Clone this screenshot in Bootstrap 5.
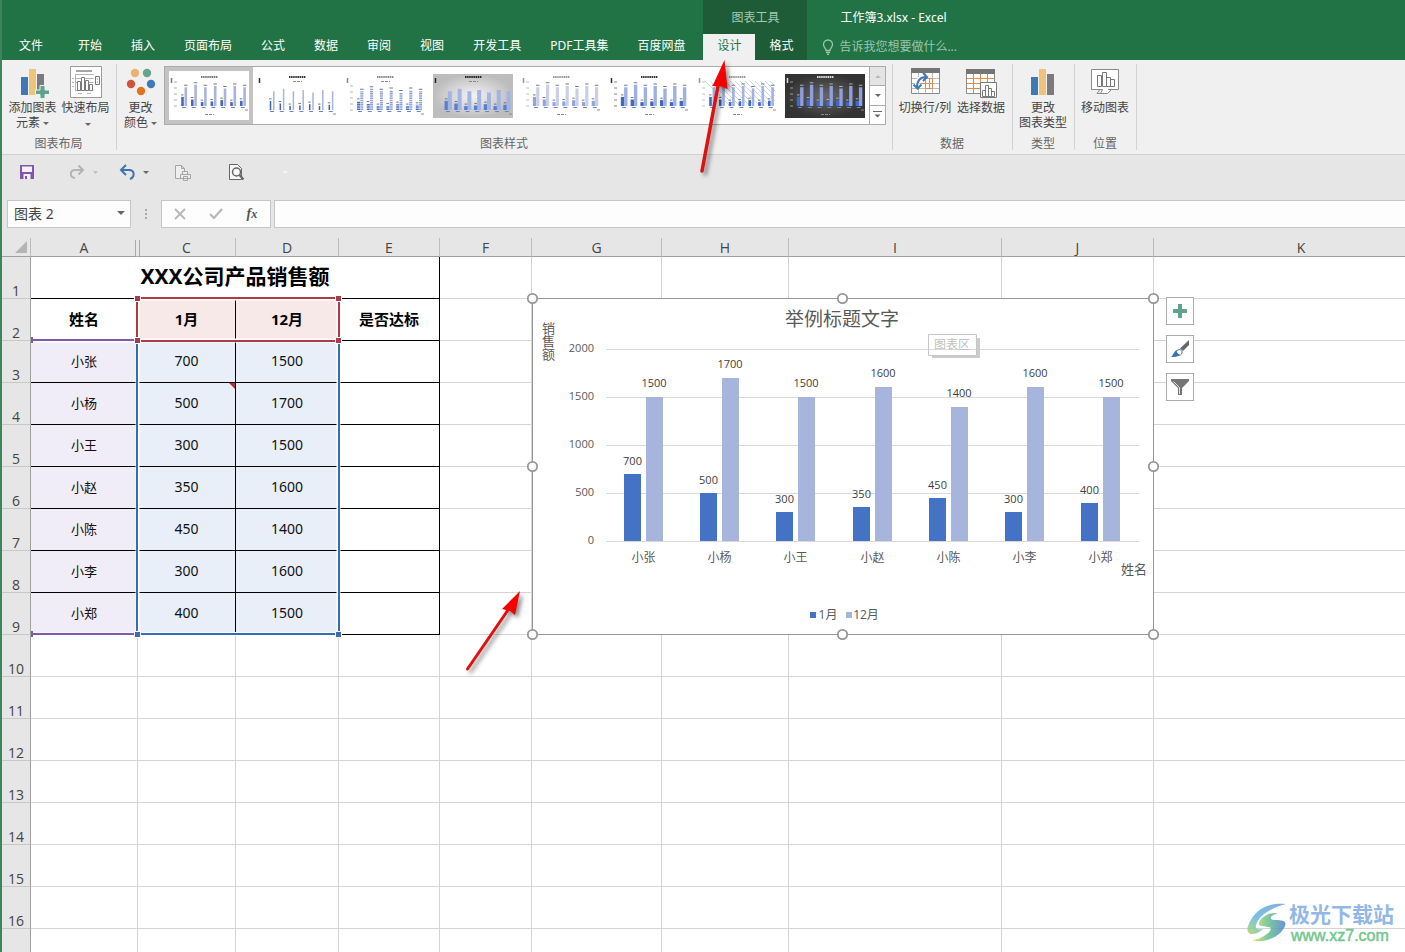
<!DOCTYPE html>
<html lang="zh-CN">
<head>
<meta charset="utf-8">
<meta name="viewport" content="width=device-width, initial-scale=1">
<title>工作簿3.xlsx - Excel</title>
<link href="https://cdn.jsdelivr.net/npm/bootstrap@5.3.0/dist/css/bootstrap.min.css" rel="stylesheet">
<style>
:root{--xl:#217346;--xl-dark:#1e5c38;--chrome:#e6e6e6;--ribbon:#f0f0f0;--line:#d4d4d4}
body{font-family:"Noto Sans","Noto Sans CJK SC",sans-serif;font-size:12px;line-height:16px;color:#444;background:var(--chrome)}
.app{border-left:2px solid #3c855d}
button{font:inherit;color:inherit;border:0;background:none;padding:0}
svg{display:block;flex:none}
/* title bar and tabs */
.topbar{background:var(--xl);height:60px;color:#fff}
.tabs{gap:29px;padding:0 18px 0 17px}
.tabs a,.ctx a{color:inherit;text-decoration:none;line-height:24px;height:26px;white-space:nowrap}
.tabs a:first-child{margin-right:6px}
.ctx{background:var(--xl-dark);width:104px}
.ctx-name{height:34px;line-height:36px;color:#a3c9b2;text-align:center}
.ctx a{flex:1;text-align:center}
.ctx a.on{background:var(--ribbon);color:var(--xl)}
.doc-name{line-height:36px;height:34px;padding-left:33px}
.tell{height:26px;padding-left:15px;gap:5px}
.tell input{background:none;border:0;padding:0;color:#fff;width:150px;outline:0}
.tell input::placeholder{color:#9cc5ad;opacity:1}
/* ribbon */
.ribbon{background:var(--ribbon);border-bottom:1px solid #d0d0d0;height:95px}
.group{position:relative;padding:6px 2px 0 0;display:flex;flex-direction:column}
.group::after{content:"";position:absolute;right:0;top:4px;bottom:4px;width:1px;background:#d2d2d2}
.group-name{color:#666;text-align:center;margin-top:auto;padding-bottom:2px}
.big{display:flex;flex-direction:column;align-items:center;line-height:15px;white-space:nowrap;color:#444}
.big svg.ico{margin-bottom:2px}
.g1 .big{width:53px}
.g3 .big{width:56px}
.drop{display:inline-block;border:3px solid transparent;border-top-color:#666;border-bottom:0;vertical-align:2px;margin-left:3px}
.gallery{border:1px solid #ababab;background:#fff;height:59px}
.gallery button.th{width:88px;height:57px;display:flex;align-items:center;justify-content:center}
.gallery button.th.on{border:4px solid #c3c3c3}
.scroller{width:16px;border-left:1px solid #ababab}
.scroller button{flex:1;display:flex;align-items:center;justify-content:center}
.scroller button+button{border-top:1px solid #ababab}
.scroller .drop{margin:0}
.scroller button:first-child{background:#e4e4e4}
/* quick access + formula bar */
.qat{display:grid;grid-template-columns:50px 50px 52px 56px 52px 46px;height:45px;padding-bottom:11px}
.qat button{display:flex;align-items:center;justify-content:center}
.fbar{height:28px}
.fbox{background:#fdfdfd;border:1px solid #c6c6c6}
.namebox{width:124px;margin-left:5px;position:relative}
.namebox select{appearance:none;border:0;background:none;width:100%;height:100%;padding:0 6px;font-size:14px;color:#444}
.namebox .drop{position:absolute;right:5px;top:10px;border-width:4px 4px 0;pointer-events:none}
.fx{width:110px;margin-right:3px}
.fx button{width:36px;display:flex;justify-content:center;align-items:center}
.fml{flex:1;border-right:0;border-radius:0;outline:0;min-width:0;padding:0 6px}
/* worksheet */
.sheet{margin-top:10px;background:#fff;position:relative;overflow:hidden;flex:1;min-height:0}
/* the last column runs on past the window edge */
.grid{table-layout:fixed;border-collapse:separate;border-spacing:0;width:calc(100% + 44px)}
.grid th,.grid td{padding:0;text-align:center;border-right:1px solid var(--line);border-bottom:1px solid var(--line)}
.grid td{padding-bottom:2px}
.grid tbody tr{height:42px}
.grid tbody tr.last{height:60px}
.grid thead th{height:19px;background:var(--chrome);border-right-color:#bdbdbd;border-bottom-color:#9f9f9f;font:400 14px/17px "Open Sans",sans-serif;color:#444;position:relative}
.grid tbody th{background:var(--chrome);border-right-color:#9f9f9f;border-bottom-color:#c8c8c8;font:400 14px/15px "Open Sans",sans-serif;color:#444;vertical-align:bottom}
.grid thead .hid{border-right-color:transparent}
.grid .hid::after{content:"";position:absolute;z-index:1;right:-3px;top:2px;bottom:0;width:5px;border:solid #aaa;border-width:0 1px}
.corner::after{content:"";position:absolute;right:3px;bottom:3px;border:6px solid;border-color:transparent #b4b4b4 #b4b4b4 transparent}
.grid td.k{border-color:#000;color:#111;font-size:14px}
.grid td.nm{background:#f1edf8;font-size:13px}
.grid td.v{background:#e8eff9}
.grid td.hd{font-size:15px;font-weight:700;color:#000}
.grid td.r{background:#f8e9e9}
.grid td.noside{border-right-color:transparent}
.grid td.ttl{font-size:21px;font-weight:700;color:#000;padding-bottom:4px}
.sel,.chart,.side,.arrow,.mark-xz{position:absolute}
.sel{left:28px;top:54px}
.chart{left:522px;top:52px}
.side{left:1164px;top:59px;display:flex;flex-direction:column;gap:10px}
.side button{width:28px;height:28px;background:#fff;border:1px solid #ababab;display:flex;align-items:center;justify-content:center}
.chart text{font-family:"Open Sans","Noto Sans CJK SC",sans-serif}
.ct{font-size:11px;fill:#404040;text-anchor:middle}
.ax{font-size:11px;fill:#595959;text-anchor:end}
.cat{font-size:12px;fill:#595959;text-anchor:middle}
.vert{font-size:13px;fill:#595959;writing-mode:vertical-rl}
.arrow{pointer-events:none;filter:drop-shadow(3px 3px 2px rgba(0,0,0,.45))}
.a1{left:690px;top:54px}
.a2{left:456px;top:584px}
.mark-xz{right:11px;bottom:7px;gap:1px;align-items:center}
.mark-xz b{display:block;font:700 21px/27px "Noto Sans CJK SC",sans-serif;color:#93b7e6}
.mark-xz span{display:block;font:400 16px/18px "Liberation Sans",sans-serif;color:#74c690;-webkit-text-stroke:.5px #74c690;padding-left:2px}
</style>
</head>
<body>
<div class="app vh-100 d-flex flex-column overflow-hidden position-relative">

<header class="topbar d-flex flex-shrink-0">
  <nav class="tabs d-flex align-items-end" aria-label="功能区">
    <a href="#">文件</a><a href="#">开始</a><a href="#">插入</a><a href="#">页面布局</a><a href="#">公式</a><a href="#">数据</a><a href="#">审阅</a><a href="#">视图</a><a href="#">开发工具</a><a href="#">PDF工具集</a><a href="#">百度网盘</a>
  </nav>
  <div class="ctx flex-shrink-0">
    <div class="ctx-name">图表工具</div>
    <nav class="d-flex" aria-label="图表工具"><a class="on" href="#">设计</a><a href="#">格式</a></nav>
  </div>
  <div class="flex-grow-1">
    <div class="doc-name">工作簿3.xlsx - Excel</div>
    <div class="tell d-flex align-items-center">
      <svg width="12" height="16" viewBox="0 0 12 16" fill="none" stroke="#9cc5ad" stroke-width="1.3"><path d="M4 11.5C4 9 1.5 8.500 1.500 5.500a4.500 4.500 0 0 1 9 0C10.500 8.500 8 9 8 11.500zM4 13.500h4M5 15.300h2"/></svg>
      <input type="text" aria-label="告诉我" placeholder="告诉我您想要做什么...">
    </div>
  </div>
</header>

<section class="ribbon d-flex flex-shrink-0">
  <div class="group g1" style="width:115px">
    <div class="d-flex ps-1">
      <button class="big"><svg class="ico" width="32" height="32" viewBox="0 0 32 32"><path fill="#3f78b5" d="M4 11h7v18H4z"/><path fill="#eec37c" d="M12 3h7v26h-7z"/><path fill="#7b7b7b" d="M20 8h7v21h-7z"/><path fill="#5fa38c" stroke="#f0f0f0" d="M23 19.500h5v4.500h4.500v4.500H28V33h-5v-4.500h-4.500V24H23z"/></svg><span>添加图表</span><span>元素<i class="drop"></i></span></button>
      <button class="big"><svg class="ico" width="32" height="32" viewBox="0 0 32 32" fill="none" stroke="#7a7a7a"><path fill="#fff" stroke="#9a9a9a" d="M.5.500h31v31H.5z"/><path stroke-width="2" stroke="#a5a5a5" d="M6 5h16"/><path stroke="#b5b5b5" d="M5.500 8.500h18M5.500 24.500h18M2 12.500h2M2 16.500h2M2 20.500h2M5.500 12.500h18M5.500 16.500h18M8 27.500h4M17 27.500h4M5.500 8v17"/><path fill="#fff" d="M7.500 15.500h3v9h-3zM11.500 11.500h3v13h-3zM15.500 14.500h3v10h-3zM19.500 18.500h3v6h-3zM25.500 10.500h4v8h-4z"/><path d="M27 13h1M27 16h1"/></svg><span>快速布局</span><i class="drop mt-2 ms-1"></i></button>
    </div>
    <div class="group-name">图表布局</div>
  </div>
  <div class="group g2" style="width:776px">
    <div class="d-flex">
      <button class="big" style="width:47px"><svg class="ico" width="32" height="32" viewBox="0 0 32 32"><circle cx="10" cy="7" r="4.200" fill="#e9b26d"/><circle cx="22" cy="7" r="4.200" fill="#63a58e"/><circle cx="6" cy="18" r="4.200" fill="#d0533a"/><circle cx="26" cy="18" r="4.200" fill="#4278b8"/><circle cx="16" cy="25" r="4.200" fill="#e27420"/></svg><span>更改</span><span>颜色<i class="drop"></i></span></button>
      <div class="gallery d-flex"><div class="d-flex" id="styles"></div>
        <div class="scroller d-flex flex-column"><button aria-label="上一行"><svg width="6" height="3"><path fill="#bbb" d="M0 3l3-3 3 3z"/></svg></button><button aria-label="下一行"><i class="drop"></i></button><button aria-label="其他"><svg width="9" height="7"><path fill="#666" d="M0 0h9v1H0zM1.500 3.500h6l-3 3z"/></svg></button></div>
      </div>
    </div>
    <div class="group-name">图表样式</div>
  </div>
  <div class="group g3" style="width:120px">
    <div class="d-flex ps-1">
      <button class="big"><svg class="ico" width="32" height="32" viewBox="0 0 32 32" fill="none"><path fill="#fff" stroke="#8a8a8a" d="M2.500 3.500h28v24h-28z"/><path fill="#757575" d="M2 2h29v5H2z"/><path stroke="#bbb" d="M9.500 7v20M16.500 7v20M23.500 7v20M3 12.500h27M3 17.500h27M3 22.500h27"/><path stroke="#e08a4a" d="M16.500 12.500h7v10h-7zM12 17.500h12M20.500 22V12"/><path stroke="#fff" stroke-width="4" d="M8 20c0-6 3-9 9-9"/><path stroke="#3f78b5" stroke-width="2" d="M8 22c0-7 3-11 9-11M14 7l4 4-4 4M4.500 18.500l4 4 4-4"/></svg><span>切换行/列</span></button>
      <button class="big"><svg class="ico" width="32" height="32" viewBox="0 0 32 32" fill="none"><path fill="#fff" stroke="#8a8a8a" d="M1.500 3.500h28v24h-28z"/><path fill="#757575" d="M1 3h29v5H1z"/><path stroke="#e08a4a" d="M8.500 8v19M15.500 8v19M22.500 8v10M2 12.500h27M2 17.500h20M2 22.500h15"/><path fill="#fff" stroke="#7a7a7a" d="M15.500 16.500h16v15h-16z"/><path fill="#fff" stroke="#7a7a7a" d="M17.500 24.500h3v6h-3zM20.500 19.500h3v11h-3zM23.500 22.500h3v8h-3zM26.500 25.500h3v5h-3z"/></svg><span>选择数据</span></button>
    </div>
    <div class="group-name">数据</div>
  </div>
  <div class="group align-items-center" style="width:62px">
    <button class="big"><svg class="ico" width="32" height="32" viewBox="0 0 32 32"><path fill="#3f78b5" d="M4 11h7v18H4z"/><path fill="#eec37c" d="M12 3h7v26h-7z"/><path fill="#7b7b7b" d="M20 8h7v21h-7z"/></svg><span>更改</span><span>图表类型</span></button>
    <div class="group-name">类型</div>
  </div>
  <div class="group align-items-center" style="width:62px">
    <button class="big"><svg class="ico" width="32" height="32" viewBox="0 0 32 32" fill="#fff" stroke="#8a8a8a"><path d="M2.500 3.500h27v20h-7l-4 4h-7l2-4h-11z"/><path fill="none" d="M2 23.500h9l-3 4h6M19 23.500h4"/><path stroke="#777" d="M8.500 9.500h4v11h-4zM13.500 6.500h4v14h-4zM21.500 13.500h4v7h-4zM17.500 11.500h4v9h-4z"/></svg><span>移动图表</span></button>
    <div class="group-name">位置</div>
  </div>
</section>

<div class="qat flex-shrink-0">
  <button aria-label="保存"><svg width="16" height="16" viewBox="0 0 16 16"><path fill="#8455ad" d="M1 1h14v14H1z"/><path fill="#f6f0fa" d="M3 2.500h10V8H3zM4.500 10h7v5h-7z"/><path fill="#8455ad" d="M6 12h2v3H6z"/></svg></button>
  <button aria-label="恢复"><svg width="44" height="16" viewBox="0 0 44 16" fill="none" stroke="#b4b4b4" stroke-width="2"><path d="M27 6h-7c-5 0-6 7 0 8M23.500 1.500L28 6l-4.500 4.500"/><path fill="#c0c0c0" stroke="none" d="M38 7h5l-2.500 3z"/></svg></button>
  <button aria-label="撤消"><svg width="44" height="16" viewBox="0 0 44 16" fill="none" stroke="#3f73b0" stroke-width="2"><path d="M16 6h7c6 0 6 7 1 9M20 1l-5 5 5 5"/><path fill="#666" stroke="none" d="M37 7h6l-3 3z"/></svg></button>
  <button aria-label="打印"><svg width="17" height="17" viewBox="0 0 17 17" fill="#eee" stroke="#a5a5a5"><path d="M1.500 1.500h6l3 3v10h-9zM7.500 1.500v3h3"/><path d="M8.500 7.500h5v3h-5zM6.500 10.500h10v4h-10zM9.500 12.500h4v4h-4z"/></svg></button>
  <button aria-label="打印预览"><svg width="17" height="18" viewBox="0 0 17 18" fill="#f8f8f8" stroke="#666"><path d="M1.500 1.500h8l4 4v11h-12z"/><circle cx="8.500" cy="9" r="4" stroke-width="1.500"/><path stroke-width="2.200" d="M11.500 12l4 4.500"/></svg></button>
  <button aria-label="自定义"><svg width="6" height="3"><path fill="#f4f4f4" d="M0 0h6L3 3z"/></svg></button>
</div>

<div class="fbar d-flex flex-shrink-0">
  <div class="fbox namebox"><select aria-label="名称框"><option>图表 2</option></select><i class="drop"></i></div>
  <svg width="30" height="28"><path fill="#a8a8a8" d="M14 9h2v2h-2zM14 13h2v2h-2zM14 17h2v2h-2z"/></svg>
  <div class="fbox fx d-flex">
    <button aria-label="取消"><svg width="12" height="12" stroke="#b8b8b8" stroke-width="1.800"><path d="M1 1l10 10M11 1L1 11"/></svg></button>
    <button aria-label="输入"><svg width="14" height="12" fill="none" stroke="#b8b8b8" stroke-width="2.200"><path d="M1 6l4 4L13 1"/></svg></button>
    <button aria-label="插入函数" style="font:italic 700 14px 'Liberation Serif',serif;color:#555"><span>f<small>x</small></span></button>
  </div>
  <input class="fbox fml" type="text" aria-label="编辑栏">
</div>

<main class="sheet">
  <table class="grid">
    <colgroup><col style="width:29px"><col style="width:107px"><col style="width:98px"><col style="width:103px"><col style="width:101px"><col style="width:92px"><col style="width:130px"><col style="width:127px"><col style="width:213px"><col style="width:152px"><col></colgroup>
    <thead><tr><th class="corner"></th><th class="hid">A</th><th>C</th><th>D</th><th>E</th><th>F</th><th>G</th><th>H</th><th>I</th><th>J</th><th>K</th></tr></thead>
    <tbody id="rows"></tbody>
  </table>

  <svg class="sel" width="316" height="350" viewBox="30 292 316 350" fill="none" aria-hidden="true">
    <g stroke="#fff" stroke-width="4"><path d="M31 340.500h106M31 634.500h106"/><path d="M137.500 340v294h201V340"/><path d="M137.500 298.500h201v42h-201z"/></g>
    <path stroke="#7d5ba6" stroke-width="2" d="M32 340h105M32 634h105"/><path fill="#7d5ba6" d="M31 337h2v6h-2zM31 631h2v6h-2z"/>
    <path stroke="#3a6cb4" stroke-width="2" d="M137 340v294h202V340"/>
    <path stroke="#ac3a47" stroke-width="2" d="M137 298h202v43H137z"/>
    <g stroke="#fff"><path fill="#3a6cb4" d="M134.500 631.500h6v6h-6zM335.500 631.500h6v6h-6z"/><path fill="#ac3a47" d="M134.500 295.500h6v6h-6zM335.500 295.500h6v6h-6zM134.500 337.500h6v6h-6zM335.500 337.500h6v6h-6z"/></g>
    <path fill="#b03040" d="M229 383h6v6z"/>
  </svg>

  <svg class="chart" width="640" height="352" viewBox="524 290 640 352" id="chart" role="img" aria-label="举例标题文字"></svg>

  <div class="side">
    <button aria-label="图表元素"><svg width="14" height="14"><path fill="#5fa38c" d="M5 0h4v5h5v4H9v5H5V9H0V5h5z"/></svg></button>
    <button aria-label="图表样式"><svg width="20" height="20" viewBox="0 0 20 20"><path fill="#666" d="M19 1v5l-6 6-3-2.500z"/><path fill="#fff" stroke="#4278b8" d="M9 10.500c2 0 3.500 1.500 3 3.500s-2.500 2.500-4 2.500L6 12z"/><path fill="#3f73b0" d="M6.500 11.500c0 2 1 3.500 3.500 4-2 2.500-5 2.500-9 2.500 2-1.500 3-6 5.500-6.500z"/></svg></button>
    <button aria-label="图表筛选器"><svg width="20" height="18" viewBox="0 0 20 18"><path fill="#757575" d="M1 1h18v2l-7 7v7H8v-7L1 3z"/><path fill="none" stroke="#fff" stroke-width=".8" d="M3.500 3.500L9.500 9.500V16"/></svg></button>
  </div>

  <div class="mark-xz d-flex" aria-hidden="true">
    <svg width="42" height="42" viewBox="0 0 42 42" opacity=".85">
      <defs><linearGradient id="wa" x1="0" y1="1" x2="1" y2="0"><stop offset="0" stop-color="#a9d66a"/><stop offset=".4" stop-color="#65b6dd"/><stop offset="1" stop-color="#6c9fe0"/></linearGradient><linearGradient id="wb"><stop offset="0" stop-color="#d6e36c"/><stop offset=".5" stop-color="#67bf8a"/><stop offset="1" stop-color="#4f83d0"/></linearGradient></defs>
      <path fill="url(#wa)" d="M40 2C22 0 8 8 2 24c-2 5 1 9 5 8 4 0 8-3 10-5-5 1-8 0-7-4C13 14 24 6 40 2z"/>
      <path fill="url(#wb)" d="M32 11c-10-1-18 5-19 10-1 4 5 3 10 4 3 1 2 4-2 7-4 3-10 6-16 6 12 4 30-3 34-14 2-5-3-6-9-6-4 0-6-1-5-3 1-2 4-3 7-4z"/>
    </svg>
    <div><b>极光下载站</b><span>www.xz7.com</span></div>
  </div>
</main>

<svg class="arrow a1" width="44" height="124" viewBox="692 54 44 124" aria-hidden="true"><path fill="none" stroke="#e01010" stroke-width="3.500" stroke-linecap="round" d="M702 171L718 86"/><path fill="#f50000" d="M724.500 60l3 29-7.500-3-7.500 0z"/></svg>
<svg class="arrow a2" width="70" height="94" viewBox="458 584 70 94" aria-hidden="true"><path fill="none" stroke="#e01010" stroke-width="3" stroke-linecap="round" d="M467.500 669L508 610"/><path fill="#f50000" d="M520 591l-5 24-5-4-8-2z"/></svg>
</div>

<script src="https://cdn.jsdelivr.net/npm/bootstrap@5.3.0/dist/js/bootstrap.bundle.min.js"></script>
<script>
const data = [['小张',700,1500],['小杨',500,1700],['小王',300,1500],['小赵',350,1600],['小陈',450,1400],['小李',300,1600],['小郑',400,1500]];

/* worksheet rows */
const blank = n => '<td></td>'.repeat(n);
let rows = `<tr><th>1</th><td class="k ttl" colspan="4">XXX公司产品销售额</td>${blank(6)}</tr>
<tr><th>2</th><td class="k hd noside">姓名</td><td class="k hd r">1月</td><td class="k hd r">12月</td><td class="k hd">是否达标</td>${blank(6)}</tr>`;
data.forEach((d, i) => rows += `<tr><th>${i + 3}</th><td class="k nm">${d[0]}</td><td class="k v">${d[1]}</td><td class="k v">${d[2]}</td><td class="k"></td>${blank(6)}</tr>`);
for (let r = 10; r <= 16; r++) rows += `<tr><th>${r}</th>${blank(10)}</tr>`;
rows += `<tr class="last"><th></th>${blank(10)}</tr>`;
document.getElementById('rows').innerHTML = rows;

/* chart */
const base = 541, unit = 0.096, step = 76.2;
let c = `<path fill="#fff" stroke="#969696" d="M532.500 298.500h621v336h-621z"/><text x="842" y="326" text-anchor="middle" font-size="19" fill="#595959">举例标题文字</text>
<text class="vert" x="548" y="322">销售额</text>`;
for (let v = 0; v <= 2000; v += 500) {
  const y = base - v * unit;
  c += `<path stroke="#d9d9d9" d="M606 ${y + .5}H1139"/><text class="ax" x="594" y="${y + 3}">${v}</text>`;
}
data.forEach((d, i) => {
  const x = Math.round(624 + i * step), h1 = Math.round(d[1] * unit), h2 = Math.round(d[2] * unit);
  c += `<rect x="${x}" y="${base - h1}" width="17" height="${h1}" fill="#4472c4"/><rect x="${x + 22}" y="${base - h2}" width="17" height="${h2}" fill="#a7b4db"/>
  <text class="ct" x="${x + 8.5}" y="${base - h1 - 9}">${d[1]}</text><text class="ct" x="${x + 30}" y="${base - h2 - 10}">${d[2]}</text><text class="cat" x="${x + 19.5}" y="562">${d[0]}</text>`;
});
c += `<text class="cat" x="1134" y="574" style="font-size:13px">姓名</text>
<path fill="#4472c4" d="M810 612h6v6h-6z"/><text class="cat" x="828" y="619">1月</text>
<path fill="#a7b4db" d="M846 612h6v6h-6z"/><text class="cat" x="866" y="619">12月</text>
<path fill="#ccc" d="M932 355h48v3h-48zM977 338h3v18h-3z"/><path fill="#fff" stroke="#c6c6c6" d="M928.500 334.500h48v21h-48z"/><path stroke="#ddd" d="M929 349.500h47"/><text class="cat" x="952" y="349" style="fill:#c0c0c0">图表区</text>`;
[[532.5,298.5],[842.5,298.5],[1153.5,298.5],[532.5,466.5],[1153.5,466.5],[532.5,634.5],[842.5,634.5],[1153.5,634.5]].forEach(p => c += `<circle cx="${p[0]}" cy="${p[1]}" r="4.700" fill="#fff" stroke="#969696" stroke-width="1.800"/>`);
document.getElementById('chart').innerHTML = c;

/* chart style gallery: a = first series, b = second series, w = bar width */
const looks = [
  {a:'#4a66b8', b:'#a9b4dc', w:2.6, bg:'#fff', t:'#777'},
  {a:'#3f5fb5', b:'#a9b4dc', w:1.5, bg:'#fff', t:'#333', wide:1},
  {a:'#4a6cc0', b:'#8ea2d8', w:3, bg:'#fff', t:'#888', wide:1, dash:1},
  {a:'#5b7fd0', b:'#a3b4e0', w:4, bg:'url(#gg)', t:'#222', wide:1},
  {a:'#93a4d8', b:'#c9cfe6', w:3.2, bg:'#fff', t:'#999'},
  {a:'#4467bd', b:'#9db0df', w:3.4, bg:'#fff', t:'#333'},
  {a:'#3f67c4', b:'#9fb2e2', w:2.6, bg:'#fff', t:'#999', hatch:1},
  {a:'#4068c8', b:'#8f9fdc', w:3.4, bg:'url(#gd)', t:'#ddd'}];
document.getElementById('styles').innerHTML = looks.map((s, n) => {
  const b = s.wide ? 36 : 32;
  let g = `<rect width="80" height="44" fill="${s.bg}"/><path stroke="${s.t}" stroke-width="2" stroke-dasharray="1.500 .600" d="M32 3h17"/><path stroke="${s.t}" stroke-width="1.500" d="M2.500 4v5"/>`;
  g += s.wide ? `<path stroke="#889" stroke-dasharray="3 1" d="M36 7.500h9"/>` : `<path stroke="#889" stroke-dasharray="3 1" d="M36 40.500h9"/>`;
  if (s.hatch) { for (let k = 0; k < 15; k++) { const x = 8 + k * 5; g += `<path stroke="#b7c3df" stroke-width=".7" d="M${x} 7L${Math.min(78, x + 24)} ${7 + Math.min(24, 78 - x)}"/>`; } }
  if (n !== 1 && n !== 3) for (let k = 0; k < 5; k++) g += `<path stroke="${s.t}" opacity=".6" d="M5 ${b - k * 6}h3"/>`;
  data.forEach((d, i) => {
    const x = 12 + i * 9.8, h1 = d[1] * .013, h2 = d[2] * .0125, ds = s.dash ? 'stroke-dasharray="1.500 .700"' : '', ink = n === 7 ? '#ccc' : '#556';
    g += `<path stroke="${s.a}" stroke-width="${s.w}" ${ds} d="M${x + 1.5} ${b}v${-h1}"/><path stroke="${s.b}" stroke-width="${s.w}" ${ds} d="M${x + 4.8} ${b}v${-h2}"/>
    <path stroke="${ink}" opacity=".8" d="M${x} ${b - h1 - 2}h2.500"/>${n === 1 || n === 3 ? '' : `<path stroke="${ink}" opacity=".8" d="M${x + 3} ${b - h2 - 2}h3.500"/>`}<path stroke="#6a86c8" d="M${x + 1} ${b + 1.5}h4"/>`;
  });
  g += `<path stroke="#889" d="M76 ${b + 4}h3"/>`;
  return `<button class="th${n ? '' : ' on'}" aria-label="样式 ${n + 1}"><svg width="80" height="44"><defs><radialGradient id="gg"><stop offset="0" stop-color="#f4f4f4"/><stop offset="1" stop-color="#bdbdbd"/></radialGradient><radialGradient id="gd"><stop offset="0" stop-color="#666"/><stop offset="1" stop-color="#333"/></radialGradient></defs>${g}</svg></button>`;
}).join('');
</script>
</body>
</html>
